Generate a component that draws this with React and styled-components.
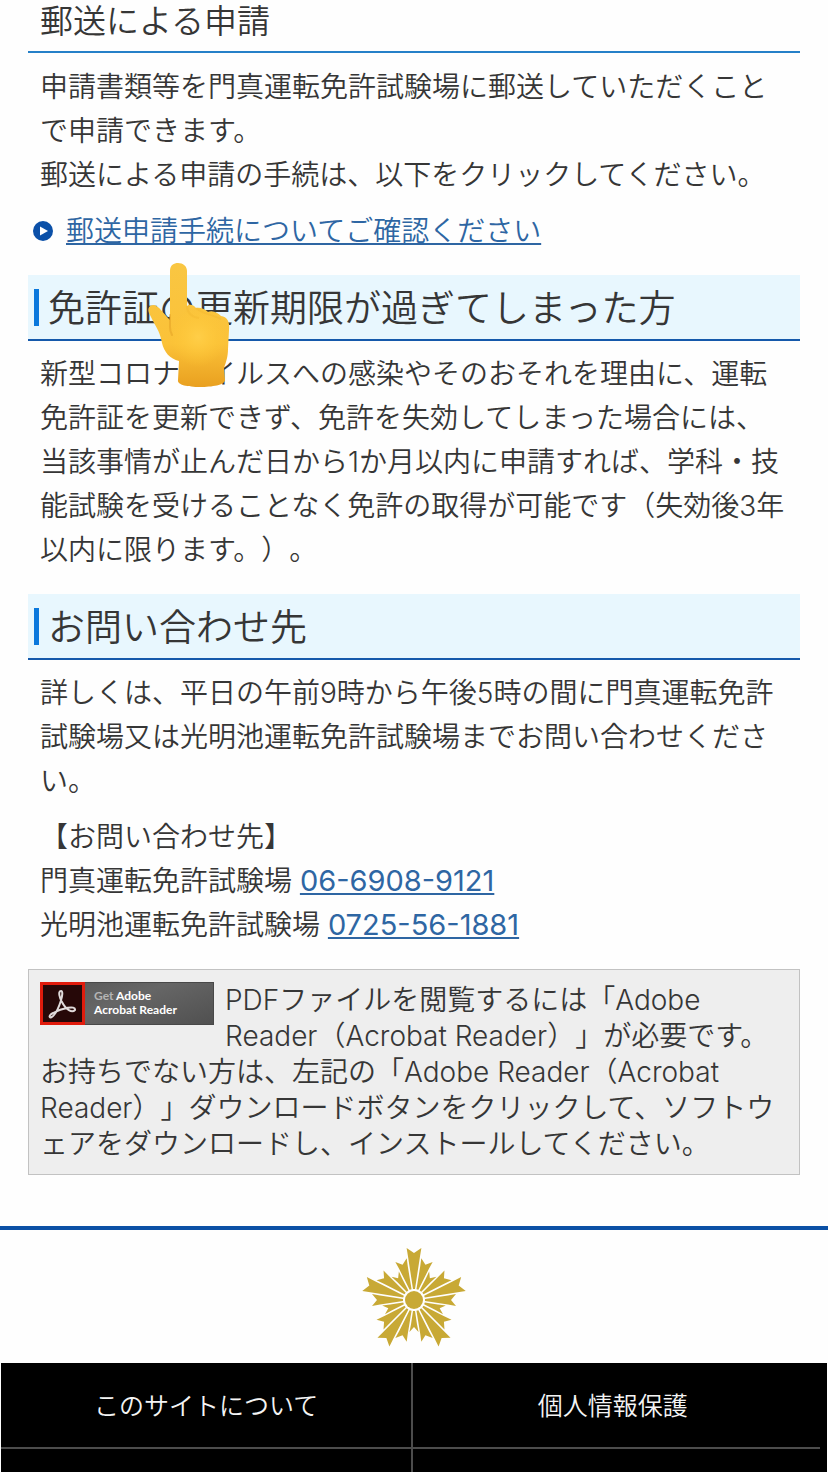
import React from "react";
import styled, { createGlobalStyle } from "styled-components";

//#region styled components
const GlobalStyle = createGlobalStyle`
  * {
    box-sizing: border-box;
  }
  body {
    margin: 0;
    background-color: #fefefe;
    color: #363636;
    font-family: Inter, "Noto Sans CJK JP", sans-serif;
    font-size: 28px;
    font-weight: 350;
    line-height: 44px;
    text-spacing-trim: space-all;
    overflow-x: hidden;
  }
`;
const Main = styled.main`
  padding: 0 28px;
`;
const SubHeading = styled.h3`
  margin: 0 0 12px;
  padding: 0 12px 8px;
  border-bottom: 2px solid #2580c8;
  font-size: 33px;
  font-weight: 350;
  line-height: 43px;
`;
const Heading = styled.h2`
  display: flex;
  align-items: center;
  margin: 0 0 11px;
  padding: 4px 6px 0;
  height: 66px;
  background-color: #e8f7fe;
  border-bottom: 2px solid #1559ab;
  font-size: 37px;
  font-weight: 350;

  &::before {
    content: "";
    width: 5px;
    height: 37px;
    margin: 0 9px 4px 0;
    background-color: #0b78dc;
  }
`;
const Text = styled.p`
  margin: 0 0 ${props => props.$gap || 12}px;
  padding: 0 12px;
`;
const Link = styled.a`
  color: #2e66a3;
  text-decoration: underline;
  text-decoration-thickness: 2px;
  text-underline-offset: 2px;
`;
const Phone = styled(Link)`
  font-size: 29px;
  font-weight: 400;
`;
const LinkList = styled.ul`
  list-style: none;
  margin: 0 0 22px;
  padding: 0 5px;
`;
const LinkItem = styled.li`
  display: flex;
  align-items: center;
  gap: 13px;
`;
const Finger = styled.svg`
  position: absolute;
  left: 146px;
  top: 261px;
  width: 86px;
  height: 128px;
`;
const ReaderBox = styled.div`
  margin-bottom: 51px;
  padding: 12px 11px;
  background-color: #eee;
  border: 1px solid #c2c2c2;
  line-height: 36px;
`;
const Badge = styled.a`
  float: left;
  display: flex;
  width: 174px;
  height: 43px;
  margin-right: 11px;
  background: linear-gradient(160deg, #555, #666 45%, #505050);
  border: 1px solid #484848;
  color: #fff;
  text-decoration: none;
`;
const BadgeIcon = styled.svg`
  width: 45px;
  height: 43px;
  margin: -1px 9px 0 -1px;
`;
const BadgeText = styled.span`
  padding-top: 6px;
  font-family: Lato, sans-serif;
  font-size: 12px;
  font-weight: 700;
  line-height: 14px;
  white-space: nowrap;
`;
const Get = styled.span`
  color: #b4b4b4;
`;
const Footer = styled.footer`
  border-top: 4px solid #0b50a5;
`;
const Emblem = styled.svg`
  display: block;
  width: 108px;
  height: 104px;
  margin: 16px auto 13px;
`;
const FooterNav = styled.nav`
  display: grid;
  grid-template-columns: 413fr 407fr;
  margin: 0 1px;
  padding-right: 7px;
  background-color: #000;
`;
const FooterLink = styled.a`
  height: 86px;
  padding-right: ${props => (props.$last ? "8px" : "0")};
  border-right: ${props => (props.$last ? "0" : "2px solid #4c4c4c")};
  border-bottom: 2px solid #4c4c4c;
  color: #f4f4f4;
  font-size: 25px;
  line-height: 86px;
  text-align: center;
  text-decoration: none;
`;
const FooterBlank = styled.div`
  height: 23px;
  border-right: ${props => (props.$last ? "0" : "2px solid #4c4c4c")};
`;
//#endregion

// Outer radius of each ray, clockwise from the top
const rays = [52, 42, 32, 42];

const renderRays = () => {
  const shapes = [];
  for (let i = 0; i < 20; i++) {
    const r = rays[i % 4];
    const tip = r * 0.142;
    const neck = (r - 8) * 0.156 - 0.8;
    shapes.push(
      <path
        key={i}
        transform={`rotate(${i * 18})`}
        d={`M-1-11L${-neck} ${8 - r}L${-tip} ${-r}L0 ${5 - r}L${tip} ${-r}L${neck} ${8 - r}L1-11Z`}
      />
    );
  }
  return shapes;
};

const Arrow = () => (
  <svg width="20" height="20" viewBox="0 0 20 20" aria-hidden="true">
    <circle cx="10" cy="10" r="10" fill="#0b50a8" />
    <path d="M7 5.5L15 10L7 14.5Z" fill="#fff" />
  </svg>
);

const PointingUp = () => (
  <Finger viewBox="0 0 86 128" aria-hidden="true">
    <defs>
      <linearGradient id="skin" x1="0" y1="0" x2="0" y2="1">
        <stop offset="0" stopColor="#f9c642" />
        <stop offset="0.65" stopColor="#fbc238" />
        <stop offset="1" stopColor="#e9a020" />
      </linearGradient>
      <radialGradient id="palm" cx="0.5" cy="0.5" r="0.5">
        <stop offset="0" stopColor="#ffce48" />
        <stop offset="1" stopColor="#ffc834" stopOpacity="0" />
      </radialGradient>
    </defs>
    <path
      d="M24 10C24 4 28 2 32 2C37 2 41 5 41 10L41 45C43 43 47 43 50 47C54 46 59 48 62 51C67 49 72 52 75 55C81 56 84 60 83 69L82 88C82 96 80 101 78 107L79 119C79 124 66 126 54 126C42 126 31 124 32 119L33 100C24 98 18 91 16 82C15 76 13 70 8 62L4 54C1 49 2 44 8 44C13 45 18 53 24 59Z"
      fill="url(#skin)"
    />
    <ellipse cx="52" cy="76" rx="28" ry="30" fill="url(#palm)" />
    <path
      d="M24 54L24 66C24 70 25 72 26 74"
      fill="none"
      stroke="#e2a024"
      strokeWidth="2"
      strokeLinecap="round"
      opacity="0.5"
    />
    <path
      d="M41 45C41 52 46 56 53 57M50 47C56 53 65 53 75 58"
      fill="none"
      stroke="#e9aa22"
      strokeWidth="2"
      opacity="0.2"
    />
  </Finger>
);

const AcrobatIcon = () => (
  <BadgeIcon viewBox="0 0 45 43" aria-hidden="true">
    <rect width="45" height="43" fill="#e01b0c" />
    <rect x="3" y="3" width="39" height="37" fill="#260808" />
    <path
      d="M21 9C17.500 9 20 17 22 20C26 28 32 31 35 28C36 23 22 26 13 31C7 34 10 38 14 33C19 27 25 9 21 9Z"
      fill="none"
      stroke="#e0dada"
      strokeWidth="2"
      strokeLinejoin="round"
    />
  </BadgeIcon>
);

const App = () => (
  <>
    <GlobalStyle />
    <Main>
      <SubHeading>郵送による申請</SubHeading>
      <Text>
        申請書類等を門真運転免許試験場に郵送していただくことで申請できます。
        <br />
        郵送による申請の手続は、以下をクリックしてください。
      </Text>
      <LinkList>
        <LinkItem>
          <Arrow />
          <Link href="#mail">郵送申請手続についてご確認ください</Link>
        </LinkItem>
      </LinkList>

      <Heading>免許証の更新期限が過ぎてしまった方</Heading>
      <Text $gap={22}>
        新型コロナウイルスへの感染やそのおそれを理由に、運転免許証を更新できず、免許を失効してしまった場合には、当該事情が止んだ日から1か月以内に申請すれば、学科・技能試験を受けることなく免許の取得が可能です（失効後3年以内に限ります。）。
      </Text>

      <Heading>お問い合わせ先</Heading>
      <Text>
        詳しくは、平日の午前9時から午後5時の間に門真運転免許試験場又は光明池運転免許試験場までお問い合わせください。
      </Text>
      <Text $gap={22}>
        【お問い合わせ先】
        <br />
        門真運転免許試験場 <Phone href="tel:0669089121">06-6908-9121</Phone>
        <br />
        光明池運転免許試験場 <Phone href="tel:0725561881">0725-56-1881</Phone>
      </Text>

      <ReaderBox>
        <Badge href="#reader">
          <AcrobatIcon />
          <BadgeText>
            <Get>Get</Get> Adobe
            <br />
            Acrobat Reader
          </BadgeText>
        </Badge>
        PDFファイルを閲覧するには「Adobe Reader（Acrobat
        Reader）」が必要です。お持ちでない方は、左記の「Adobe Reader（Acrobat
        Reader）」ダウンロードボタンをクリックして、ソフトウェアをダウンロードし、インストールしてください。
      </ReaderBox>
    </Main>

    <Footer>
      <Emblem viewBox="-54 -54 108 104" fill="#c8a935" aria-hidden="true">
        {renderRays()}
        <circle r="9" />
      </Emblem>
      <FooterNav>
        <FooterLink href="#about">このサイトについて</FooterLink>
        <FooterLink href="#privacy" $last>
          個人情報保護
        </FooterLink>
        <FooterBlank />
        <FooterBlank $last />
      </FooterNav>
    </Footer>
    <PointingUp />
  </>
);

export default App;
